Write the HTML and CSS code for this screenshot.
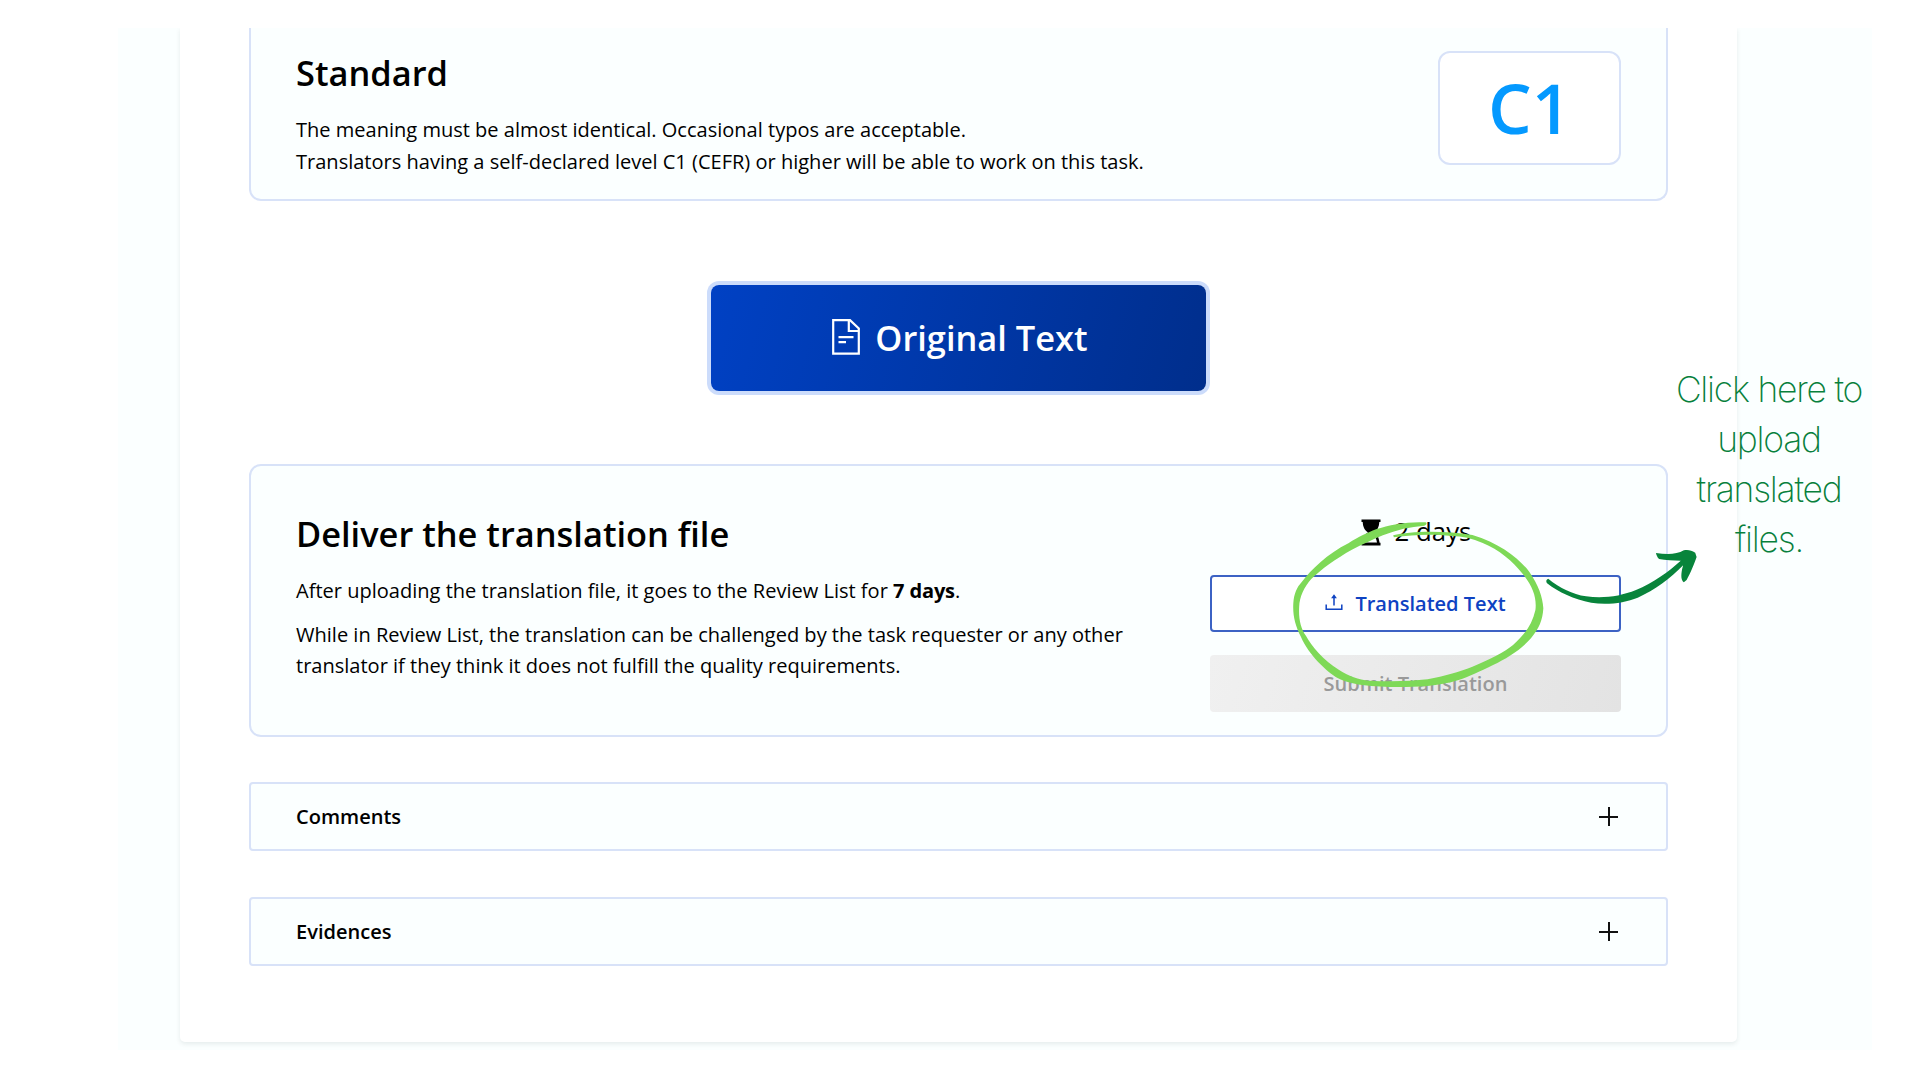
FILE: index.html
```html
<!DOCTYPE html>
<html lang="en">
<head>
<meta charset="utf-8">
<title>Deliver the translation file</title>
<link rel="stylesheet" href="styles.css">
</head>
<body>
<div class="page">
  <main class="panel">
    <section class="card quality">
      <div class="card-text">
        <h2>Standard</h2>
        <p>The meaning must be almost identical. Occasional typos are acceptable.<br>Translators having a self-declared level C1 (CEFR) or higher will be able to work on this task.</p>
      </div>
      <div class="level">C1</div>
    </section>

    <button class="original">
      <svg class="doc-icon" viewBox="0 0 28 36" fill="none" stroke="currentColor" stroke-width="2.200"><path d="M1.2 1.2H18L26.8 9.500V34.600H1.200Z"/><path d="M16.800 1.200V12H26.800M6.500 18.200H21.500M6.500 23.200H14"/></svg>
      <span>Original Text</span>
    </button>

    <section class="card deliver">
      <div class="card-text">
        <h2>Deliver the translation file</h2>
        <p>After uploading the translation file, it goes to the Review List for <b>7 days</b>.</p>
        <p>While in Review List, the translation can be challenged by the task requester or any other translator if they think it does not fulfill the quality requirements.</p>
      </div>
      <div class="actions">
        <div class="deadline">
          <svg class="hourglass" viewBox="0 0 20 27"><path fill="currentColor" d="M.5 .5H19.500V3H18.300C18 8 16.500 11 13 13.500C16.500 15.500 17.800 18.500 18.600 23.800H19.500V26.500H.5V23.800H1.400C2.200 18.500 3.500 15.500 7 13.500C3.500 11 2 8 1.700 3H.5Z"/><path fill="#fbffff" d="M3.800 23.500C4.600 19.500 6.500 16.800 8.800 15.500H12C14 17 15.300 19.500 16 23.500Z"/></svg>
          <span>2 days</span>
        </div>
        <button class="upload">
          <svg class="upload-icon" viewBox="0 0 18 17" fill="none" stroke="currentColor" stroke-width="1.500"><path d="M1.200 10.500V15.200H16.800V10.500M9 11.500V2"/><path fill="currentColor" stroke="none" d="M9 .3L11.900 4.200H6.100Z"/></svg>
          <span>Translated Text</span>
        </button>
        <button class="submit" disabled>Submit Translation</button>
      </div>
    </section>

    <section class="fold"><h3>Comments</h3><span class="plus"></span></section>
    <section class="fold"><h3>Evidences</h3><span class="plus"></span></section>
  </main>
</div>

<svg class="marks" viewBox="0 0 1568 750" preserveAspectRatio="none">
  <path fill="#7ed957" d="M590 106C640 92 740 91 820 105C900 130 955 175 985 215C1012 255 1024 290 1026 325C1024 360 1014 385 990 415C960 450 920 475 880 495C840 515 810 530 780 540C750 550 720 555 690 558C620 563 560 562 500 555C470 551 450 545 430 535C395 513 345 465 322 410C305 375 298 345 300 310C302 280 310 262 325 245C350 212 400 160 460 130C490 110 515 98 540 88C580 74 635 64 684 67C690 70 686 75 680 77C640 80 600 89 560 106C530 119 500 134 470 149C425 175 380 208 352 237C332 260 318 290 317 320C315 355 321 385 337 408C353 438 388 482 432 509C460 529 490 538 520 542C580 545 640 544 690 538C740 527 780 516 820 500C870 479 915 455 938 435C971 405 993 375 1003 330C1007 295 997 262 967 223C937 183 897 149 850 129C820 115 790 109 760 108C700 101 650 104 592 112Z"/>
  <path fill="#08843b" d="M1040 236C1075 265 1110 282 1150 289C1200 296 1250 289 1295 270C1345 248 1390 215 1425 182C1405 181 1380 181 1362 177C1357 172 1354 165 1353 159C1385 164 1413 164 1434 151C1447 149 1456 151 1467 158L1471 171C1465 190 1453 220 1442 240L1434 247C1426 240 1425 228 1429 207L1432 196C1395 235 1350 270 1300 293C1262 309 1210 316 1165 308C1115 298 1070 277 1036 249C1033 242 1035 238 1040 236Z"/>
</svg>
<p class="note">Click here to<br>upload<br>translated<br>files.</p>
</body>
</html>
```
FILE: styles.css
```css
* { box-sizing: border-box; }

body {
  margin: 0;
  height: 1080px;
  padding: 28px 48px 30px 118px;
  position: relative;
  overflow: hidden;
  background: #fff;
  color: #000;
  font: 20.040px/31.5px "Open Sans", sans-serif;
}

h2, h3, p { margin: 0; }
button { font: inherit; margin: 0; padding: 0; }

.page {
  height: 1022px;
  padding: 0 135px 8px 62px;
  overflow: hidden;
  background: #fbffff;
}

.panel {
  height: 1014px;
  padding: 0 69px;
  display: flex;
  flex-direction: column;
  background: #fff;
  border-radius: 0 0 5px 5px;
  box-shadow: 0 2px 5px rgba(0, 40, 40, .09);
}

.card {
  display: flex;
  justify-content: space-between;
  border: 2px solid #d8e2f8;
  border-radius: 12px;
  background: #fbffff;
  padding: 0 45px;
}

.quality {
  height: 173px;
  border-top: 0;
  border-radius: 0 0 12px 12px;
}

.card h2 {
  font-size: 34.4px;
  line-height: 48px;
  font-weight: 600;
}

.quality h2 { margin-top: 21px; }
.quality p { margin-top: 17px; }

.level {
  width: 183px;
  height: 114px;
  margin-top: 23px;
  display: flex;
  align-items: center;
  justify-content: center;
  border: 2px solid #d8e2f8;
  border-radius: 12px;
  background: #fff;
  color: #0499ff;
  font-size: 69px;
  font-weight: 600;
}

.original {
  width: 495px;
  height: 106px;
  margin-top: 84px;
  padding-left: 3px;
  align-self: center;
  display: flex;
  align-items: center;
  justify-content: center;
  gap: 15px;
  border: 0;
  border-radius: 8px;
  background: linear-gradient(105deg, #0041c4, #002e8c);
  box-shadow: 0 0 0 4px #ccdcfb;
  color: #fff;
  font-size: 34.4px;
  font-weight: 600;
}

.doc-icon { width: 28px; height: 36px; margin-top: -3px; }

.deliver {
  height: 273px;
  margin-top: 73px;
}

.deliver .card-text { width: 860px; padding-top: 44px; }
.deliver p { margin-top: 12px; }
.deliver h2 + p { margin-top: 17px; }
.deliver b { font-weight: 700; letter-spacing: -.15px; }

.actions {
  width: 411px;
  padding-top: 44px;
}

.deadline {
  height: 44px;
  display: flex;
  align-items: center;
  justify-content: center;
  gap: 14px;
  padding-left: 1px;
  font-size: 25.800px;
}

.hourglass { width: 20px; height: 27px; }

.upload, .submit {
  width: 411px;
  height: 57px;
  display: flex;
  align-items: center;
  justify-content: center;
  border-radius: 4px;
  font-size: 20.040px;
  font-weight: 600;
}

.upload {
  margin-top: 21px;
  gap: 12px;
  border: 2px solid #3c62c4;
  background: #fff;
  color: #0e42c2;
}

.upload-icon { width: 18px; height: 17px; margin-top: -2px; }

.submit {
  margin-top: 23px;
  border: 0;
  background: linear-gradient(105deg, #f0f0f0, #e3e3e3);
  color: #999;
}

.fold {
  height: 69px;
  margin-top: 46px;
  padding: 0 48px 0 45px;
  display: flex;
  align-items: center;
  justify-content: space-between;
  border: 2px solid #d8e2f8;
  border-radius: 4px;
  background: #fbffff;
}

.deliver + .fold { margin-top: 45px; }

.fold h3 { font-size: 20.040px; font-weight: 600; }

.plus {
  width: 19px;
  height: 19px;
  background:
    linear-gradient(#111, #111) center / 19px 2px no-repeat,
    linear-gradient(#111, #111) center / 2px 19px no-repeat;
}

/* hand-drawn marks and note laid over the page */
.marks {
  position: absolute;
  left: 1190px;
  top: 500px;
  width: 540px;
  height: 250px;
}

.note {
  position: absolute;
  left: 1659px;
  top: 365px;
  width: 220px;
  text-align: center;
  font: 200 35.500px/50px Inter, sans-serif;
  letter-spacing: -1.250px;
  color: #08803c;
}
```
